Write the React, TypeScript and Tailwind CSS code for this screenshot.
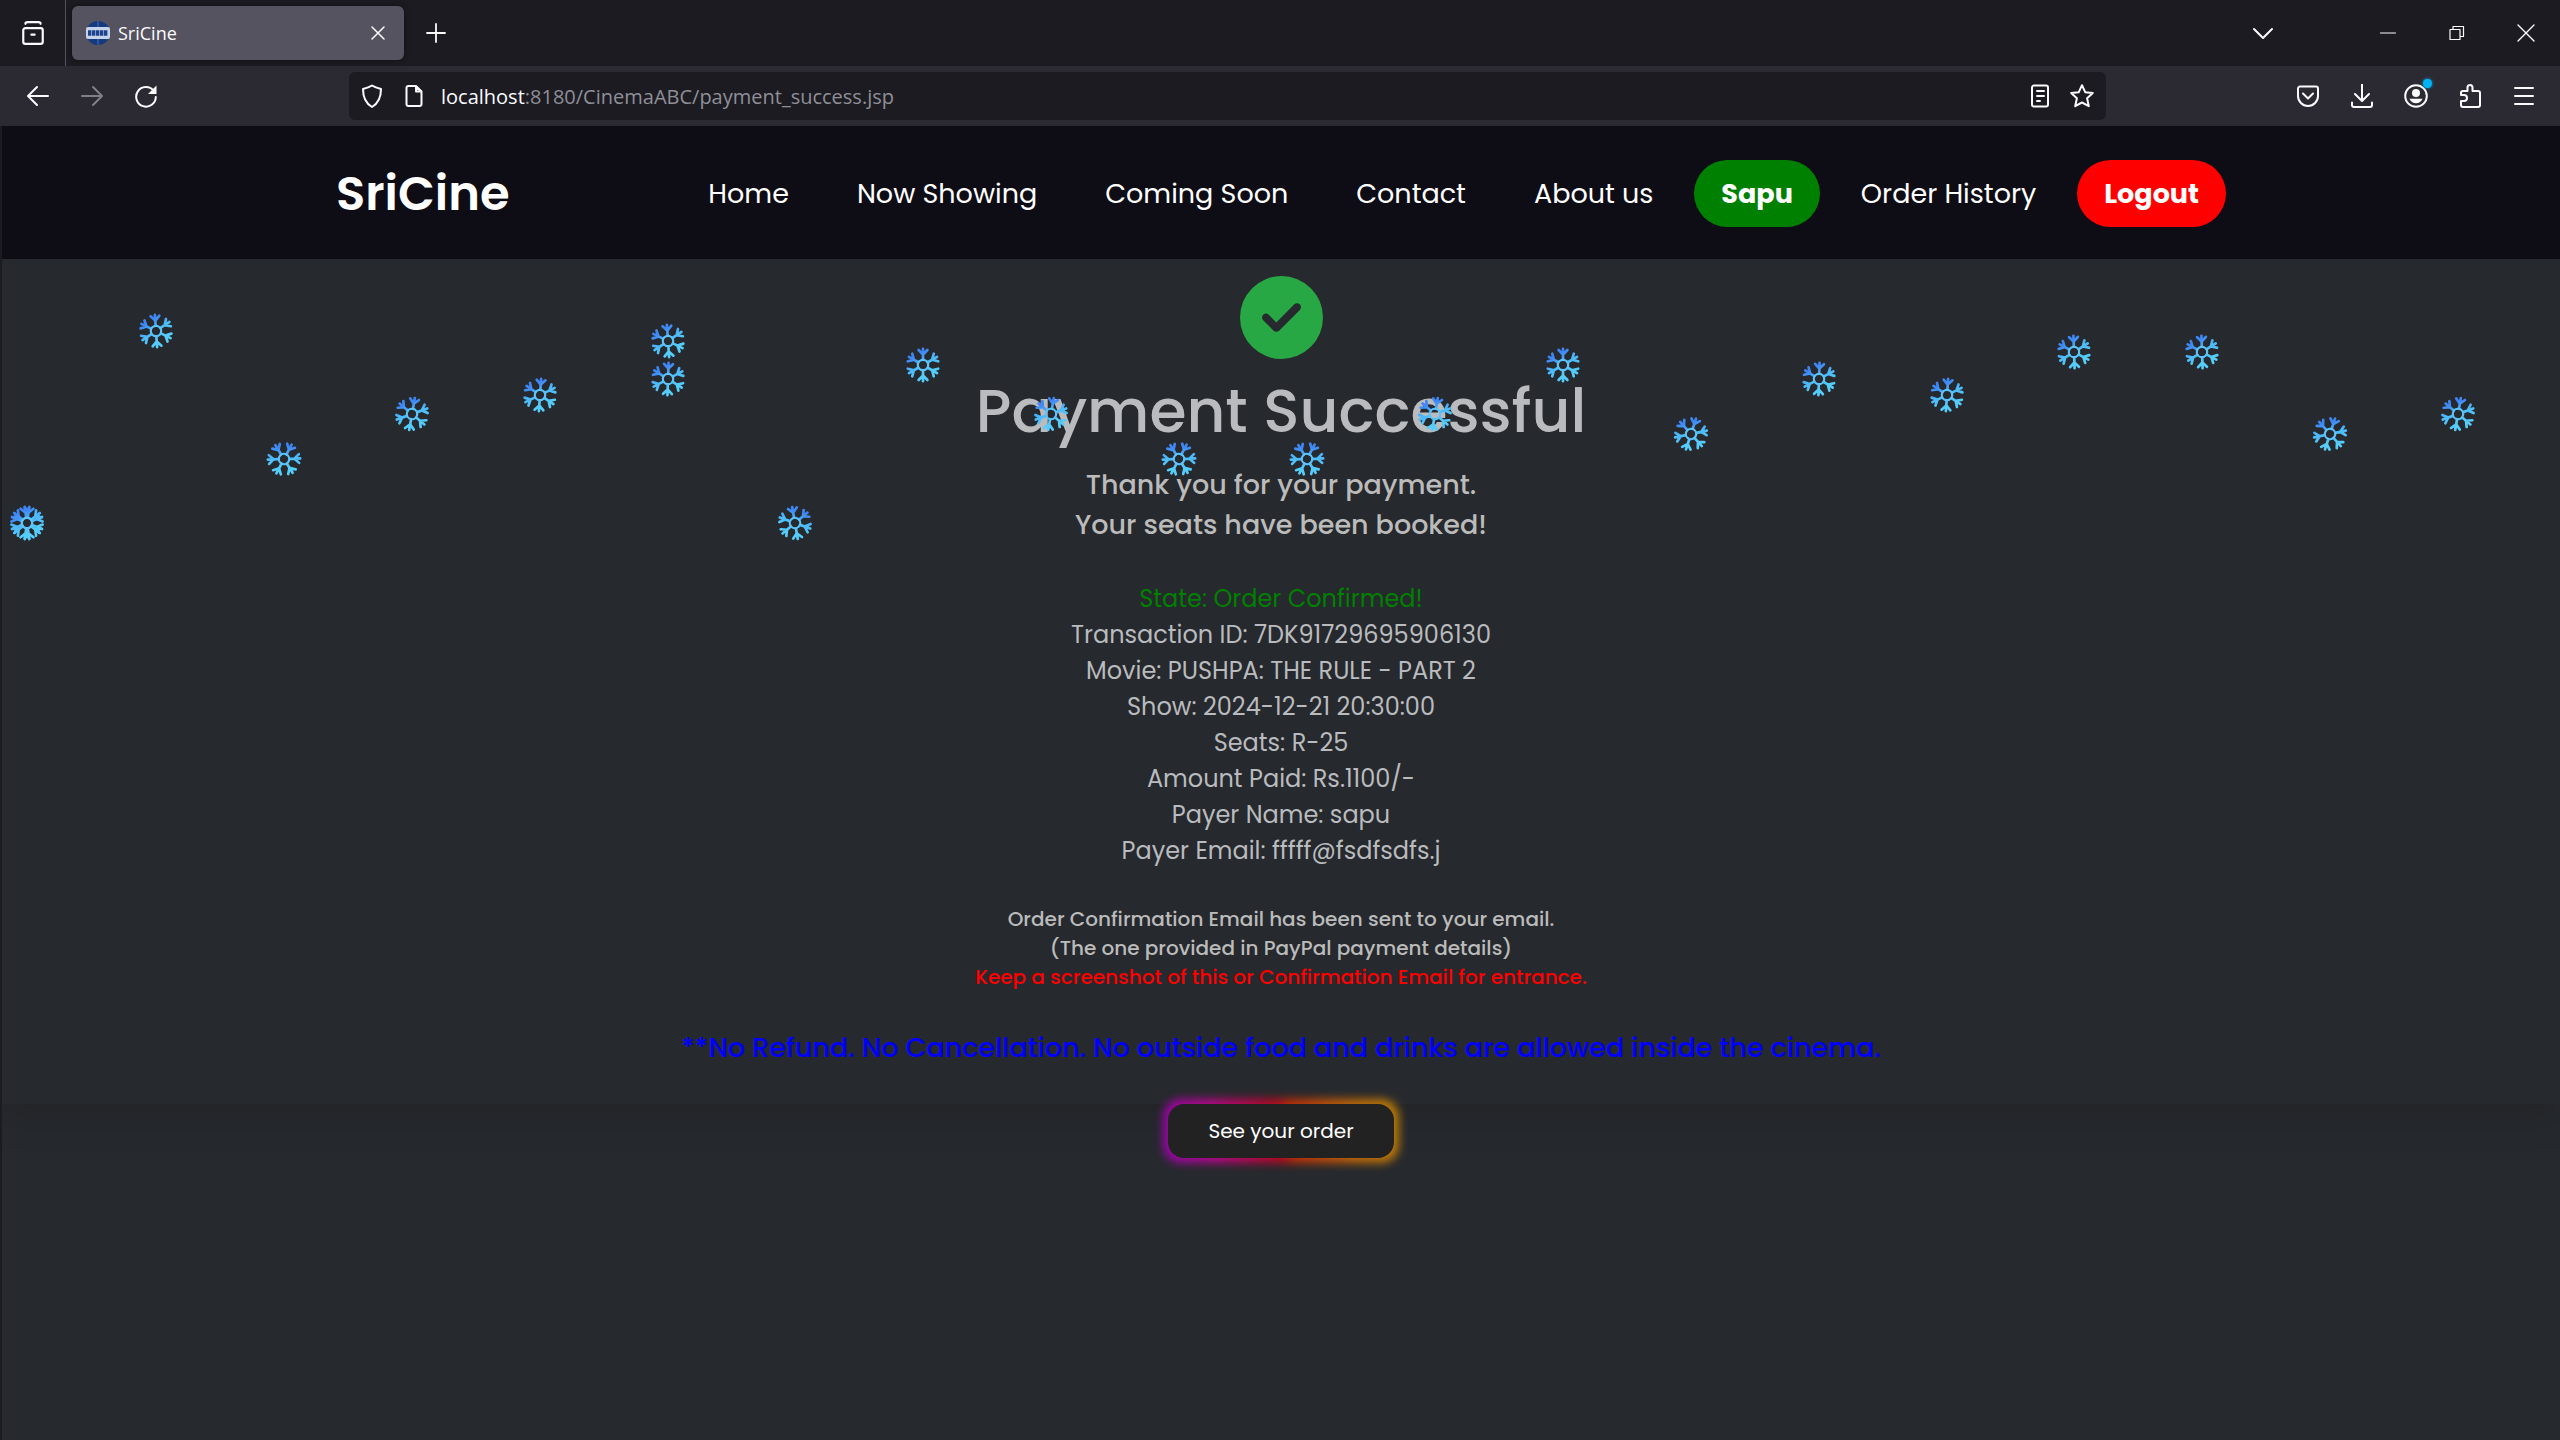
import { FaCircleCheck } from "react-icons/fa6";

type Flake = { pos: string; turn: number };

const flakes: Flake[] = [
  { pos: "left-[7px] top-[246px]", turn: -8 },
  { pos: "left-[7px] top-[246px]", turn: 8 },
  { pos: "left-[136px] top-[54px]", turn: -4 },
  { pos: "left-[264px] top-[182px]", turn: 28 },
  { pos: "left-[392px] top-[137px]", turn: 10 },
  { pos: "left-[520px] top-[118px]", turn: 4 },
  { pos: "left-[648px] top-[64px]", turn: -4 },
  { pos: "left-[648px] top-[102px]", turn: 2 },
  { pos: "left-[775px] top-[246px]", turn: 50 },
  { pos: "left-[903px] top-[88px]", turn: 0 },
  { pos: "left-[1031px] top-[137px]", turn: 10 },
  { pos: "left-[1159px] top-[182px]", turn: 28 },
  { pos: "left-[1287px] top-[182px]", turn: 28 },
  { pos: "left-[1415px] top-[137px]", turn: 10 },
  { pos: "left-[1543px] top-[88px]", turn: 0 },
  { pos: "left-[1671px] top-[157px]", turn: 18 },
  { pos: "left-[1799px] top-[102px]", turn: 2 },
  { pos: "left-[1927px] top-[118px]", turn: 4 },
  { pos: "left-[2054px] top-[75px]", turn: -2 },
  { pos: "left-[2182px] top-[75px]", turn: -2 },
  { pos: "left-[2310px] top-[157px]", turn: 18 },
  { pos: "left-[2438px] top-[137px]", turn: 10 },
];

// One path for all six arms, so the gradient runs across the whole flake.
const arms = [0, 60, 120, 180, 240, 300]
  .map((deg) => {
    const a = (deg * Math.PI) / 180;
    const at = (x: number, y: number) =>
      `${(x * Math.cos(a) - y * Math.sin(a)).toFixed(2)} ${(x * Math.sin(a) + y * Math.cos(a)).toFixed(2)}`;
    return `M${at(0, -5.5)}L${at(0, -16.2)}M${at(-4.4, -15)}L${at(0, -10.5)}L${at(4.4, -15)}`;
  })
  .join("");

function Snowflake({ pos, turn }: Flake) {
  return (
    <svg
      viewBox="-18 -18 36 36"
      className={`absolute size-9 ${pos}`}
      fill="none"
      stroke="url(#ice)"
      strokeWidth="2.700"
      strokeLinecap="round"
      strokeLinejoin="round"
      aria-hidden="true"
    >
      <g transform={`rotate(${turn})`}>
        <path d={arms} />
        <circle r="5.200" stroke="#5cc4fb" strokeWidth="2.200" />
      </g>
    </svg>
  );
}

function Icon({ d, className = "size-6", width = 2 }: { d: string; className?: string; width?: number }) {
  return (
    <svg
      viewBox="0 0 24 24"
      className={`shrink-0 ${className}`}
      fill="none"
      stroke="currentColor"
      strokeWidth={width}
      strokeLinecap="round"
      strokeLinejoin="round"
      aria-hidden="true"
    >
      <path d={d} />
    </svg>
  );
}

function TabStrip() {
  return (
    <div className="flex h-[66px] items-center bg-[#1c1b22] text-[#fbfbfe]">
      <button aria-label="Recent browsing" className="flex h-full w-[66px] items-center justify-center border-r border-[#52525e]">
        <Icon d="M5 7.500h14a2 2 0 0 1 2 2V20a2 2 0 0 1-2 2H5a2 2 0 0 1-2-2V9.500a2 2 0 0 1 2-2M5 3.500Q5 2 7 2h10q2 0 2 1.500M10.500 13.500h3" className="size-[26px]" />
      </button>
      <div className="ml-[6px] flex h-[54px] w-[332px] items-center rounded-md bg-[#55535f] pr-[14px] pl-[14px] shadow-[0_0_5px_rgba(0,0,0,0.5)]">
        <svg viewBox="0 0 24 24" className="size-6" aria-hidden="true">
          <circle cx="12" cy="12" r="12" fill="#153a80" />
          <path d="M12 0v24M3 6q9 4 18 0M3 18q9-4 18 0" stroke="#4a6cb0" fill="none" />
          <rect y="6" width="24" height="12" rx="2" fill="#c4d3ea" />
          <path d="M2 12h20" stroke="#1e438c" strokeWidth="5.500" strokeDasharray="3.400 .600" />
        </svg>
        <span className="ml-2 font-['Segoe_UI','Open_Sans',sans-serif] text-[18px]">SriCine</span>
        <button aria-label="Close tab" className="ml-auto">
          <Icon d="M6 6l12 12M18 6L6 18" className="size-6" width={1.5} />
        </button>
      </div>
      <button aria-label="New tab" className="ml-5">
        <Icon d="M12 3v18M3 12h18" className="size-6" width={1.8} />
      </button>
      <button aria-label="List all tabs" className="mr-[78px] ml-auto">
        <Icon d="M3 8l9 9 9-9" className="size-6" width={2} />
      </button>
      <button aria-label="Minimize" className="flex w-[69px] justify-center">
        <Icon d="M4.500 12h15" className="size-6" width={1.2} />
      </button>
      <button aria-label="Restore" className="flex w-[69px] justify-center">
        <Icon d="M5 8.500h10v10H5zM8 8V5.500h10.500V15.500h-3" className="size-6" width={1.2} />
      </button>
      <button aria-label="Close window" className="flex w-[69px] justify-center">
        <Icon d="M4 4l16 16M20 4L4 20" className="size-6" width={1.4} />
      </button>
    </div>
  );
}

function Toolbar() {
  return (
    <div className="flex h-[60px] items-center bg-[#2b2a33] pr-6 pl-[26px] text-[#fbfbfe]">
      <button aria-label="Back" className="w-[54px]">
        <Icon d="M22 12H2.500M11 3L2 12l9 9" />
      </button>
      <button aria-label="Forward" className="w-[54px] text-[#807f87]">
        <Icon d="M2 12h19.500M13 3l9 9-9 9" />
      </button>
      <button aria-label="Reload">
        <svg viewBox="0 0 24 24" className="size-6" fill="none" stroke="currentColor" strokeWidth="2" strokeLinecap="round" aria-hidden="true">
          <path d="M19.500 6.500A9.800 9.800 0 1 0 21.800 13" />
          <path d="M22.500 1.500v8.500H14z" fill="currentColor" stroke="none" />
        </svg>
      </button>
      <div className="ml-[191px] flex h-12 flex-1 items-center rounded-md bg-[#1c1b22] pr-3 pl-[11px]">
        <Icon d="M12 1.500c3 2 6 2.800 9 3.500 0 8-3 14.500-9 18C6 19.500 3 13 3 5c3-.700 6-1.500 9-3.500z" />
        <Icon d="M6.500 2H14l5.500 5.500V20a2 2 0 0 1-2 2h-11a2 2 0 0 1-2-2V4a2 2 0 0 1 2-2M14 2v5.500h5.500L14 3z" className="ml-[18px] size-6" />
        <div className="ml-[15px] flex-1 pt-[2px] font-['Segoe_UI','Open_Sans','Noto_Sans',sans-serif] text-[20px] text-[#8f8f96]">
          <span className="text-[#fbfbfe]">localhost</span>:8180/CinemaABC/payment_success.jsp
        </div>
        <button aria-label="Reader view">
          <Icon d="M6 1.500h12a2 2 0 0 1 2 2v17a2 2 0 0 1-2 2H6a2 2 0 0 1-2-2v-17a2 2 0 0 1 2-2M9 7h7M9 12h7M9 17h3" />
        </button>
        <button aria-label="Bookmark this page" className="ml-[18px]">
          <Icon d="M12 1.200l3.200 7 7.600.8-5.700 5.200 1.700 8L12 18.500l-6.800 3.700 1.700-8L1.200 9l7.600-.8z" />
        </button>
      </div>
      <div className="ml-[190px] flex items-center gap-[30px]">
        <button aria-label="Save to Pocket">
          <Icon d="M4 2.500h16a2 2 0 0 1 2 2V12a10 10 0 0 1-20 0V4.500a2 2 0 0 1 2-2M7 9.500l5 5 5-5" />
        </button>
        <button aria-label="Downloads">
          <Icon d="M12 0v16.500M5 10l7 7 7-7M2 18.500v2.500a2 2 0 0 0 2 2h16a2 2 0 0 0 2-2v-2.500" />
        </button>
        <button aria-label="Account" className="relative">
          <svg viewBox="0 0 24 24" className="size-6" aria-hidden="true">
            <circle cx="12" cy="12" r="10.800" fill="none" stroke="currentColor" strokeWidth="2" />
            <circle cx="12" cy="9" r="4" fill="currentColor" />
            <path d="M5.500 14.800h13a7 7 0 0 1-13 0z" fill="currentColor" />
          </svg>
          <span className="absolute -top-[5px] -right-[4px] size-[9px] rounded-full bg-[#00b3f4] shadow-[0_0_3px_#00b3f4]" />
        </button>
        <button aria-label="Extensions">
          <Icon d="M3 11V9a2 2 0 0 1 2-2h4.500V3.500a2.500 2.500 0 0 1 5 0V7H20a2 2 0 0 1 2 2v12a2 2 0 0 1-2 2H5a2 2 0 0 1-2-2v-4h3a3 3 0 0 0 0-6z" />
        </button>
        <button aria-label="Menu">
          <Icon d="M3 4h18M3 12h18M3 20h18" />
        </button>
      </div>
    </div>
  );
}

const links = ["Home", "Now Showing", "Coming Soon", "Contact", "About us"];
const item = "px-[27px] leading-[67px]";

function SiteHeader() {
  return (
    <header className="bg-[#0e0c15] px-6 pt-[34px] pb-8 text-white">
      <div className="mx-auto flex max-w-[1890px] items-center justify-between">
        <a href="#" className="text-[48px] leading-[67px] font-semibold">SriCine</a>
        <nav className="flex gap-[14px] text-[27px] whitespace-nowrap">
          {links.map((l) => (
            <a key={l} href="#" className={item}>{l}</a>
          ))}
          <a href="#" className="rounded-full bg-[#008000] px-[27px] leading-[67px] font-bold">Sapu</a>
          <a href="#" className={item}>Order History</a>
          <a href="#" className="rounded-full bg-[#ff0000] px-[27px] leading-[67px] font-bold">Logout</a>
        </nav>
      </div>
    </header>
  );
}

const details = [
  "Transaction ID: 7DK91729695906130",
  "Movie: PUSHPA: THE RULE - PART 2",
  "Show: 2024-12-21 20:30:00",
  "Seats: R-25",
  "Amount Paid: Rs.1100/-",
  "Payer Name: sapu",
  "Payer Email: fffff@fsdfsdfs.j",
];

export default function App() {
  return (
    <div className="flex min-h-screen flex-col bg-[#26292d] font-['Poppins','Inter',sans-serif]">
      <TabStrip />
      <Toolbar />
      <div className="flex flex-1 flex-col border-l-2 border-[#1c1b22]">
        <SiteHeader />
        <main className="relative flex flex-1 flex-col items-center overflow-hidden text-center text-[#b9bbbe]">
          <section className="flex w-full flex-col items-center pt-[17px] pb-9 shadow-[0_8px_40px_rgba(0,0,0,0.14)]">
            <FaCircleCheck className="size-[83px] text-[#28a745]" />
            <h1 className="mt-4 text-[60px] leading-[72px] font-medium">Payment Successful</h1>
            <p className="mt-[18px] text-[27px] leading-10 font-medium text-[#bbbbbb]">
              Thank you for your payment.
              <br />
              Your seats have been booked!
            </p>
            <div className="mt-9 text-[24px] leading-9">
              <p className="text-[#008000]">State: Order Confirmed!</p>
              {details.map((d) => (
                <p key={d}>{d}</p>
              ))}
            </div>
            <p className="mt-9 text-[20px] leading-[29px] font-medium text-[#bbbbbb]">
              Order Confirmation Email has been sent to your email.
              <br />
              (The one provided in PayPal payment details)
              <br />
              <span className="text-[#ff0000]">Keep a screenshot of this or Confirmation Email for entrance.</span>
            </p>
            <p className="mt-9 text-[27px] leading-10 font-medium text-[#0000ff]">
              **No Refund. No Cancellation. No outside food and drinks are allowed inside the cinema.
            </p>
          </section>
          <div className="relative">
            <div className="absolute -inset-[5px] rounded-[18px] bg-[linear-gradient(84deg,#a400c0_0%,#d4009c_22%,#d8001c_49%,#e02c00_54%,#e07000_78%,#d89000_100%)] opacity-85 blur-[5px]" />
            <button className="relative block h-[54px] w-[226px] rounded-2xl bg-[#222222] text-[20px] text-white">See your order</button>
          </div>
          <svg className="absolute size-0" aria-hidden="true">
            <defs>
              <linearGradient id="ice" gradientUnits="userSpaceOnUse" x1="-9" y1="-15" x2="5" y2="9">
                <stop offset="0.2" stopColor="#3f86f5" />
                <stop offset="0.55" stopColor="#4db8f8" />
                <stop offset="1" stopColor="#55ccfa" />
              </linearGradient>
            </defs>
          </svg>
          {flakes.map((f, i) => (
            <Snowflake key={i} {...f} />
          ))}
        </main>
      </div>
    </div>
  );
}
